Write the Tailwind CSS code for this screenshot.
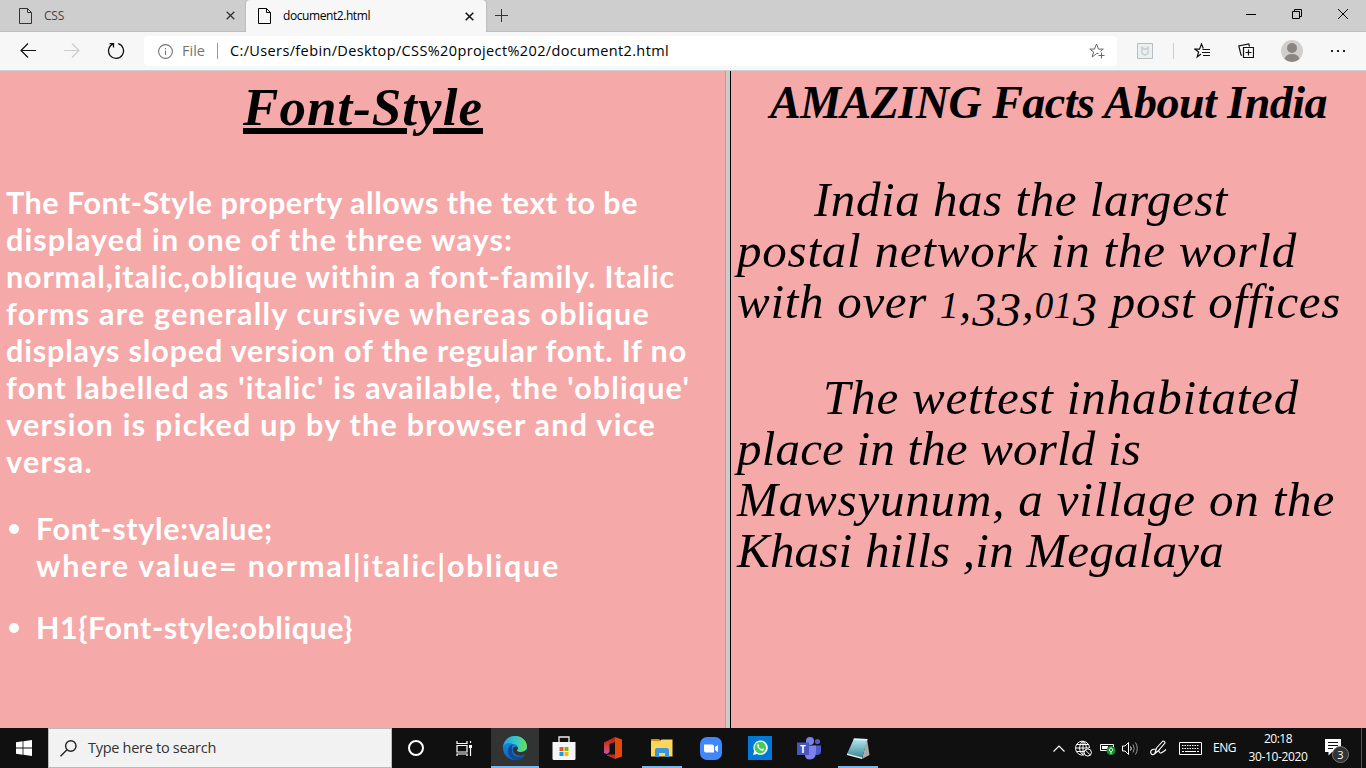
<!DOCTYPE html>
<html lang="en">
<head>
<meta charset="utf-8">
<title>document2.html</title>
<script src="https://cdn.jsdelivr.net/npm/@tailwindcss/browser@4"></script>
</head>
<body class="w-[1366px] h-[768px] overflow-hidden flex flex-col font-['Open_Sans',sans-serif] bg-[#f7f7f7] text-black">

<!-- Tab strip -->
<header class="h-8 shrink-0 flex bg-[#cecece]">
  <div class="w-[246px] h-8 flex items-center pl-[18px] pr-[11px] border-b border-[#bdbdbd] text-[#444]">
    <svg class="w-4 h-4 shrink-0" viewBox="0 0 16 16" fill="none" stroke="#333"><path d="M1.500 .5H9.500L13.500 4.500V15.500H1.500ZM9.500 .5V4.500H13.500"/></svg>
    <span class="ml-[10px] text-[12px] leading-none whitespace-nowrap" data-w="20">CSS</span>
    <svg class="w-[9px] h-[9px] ml-auto" viewBox="0 0 9 9" stroke="#333" stroke-width="1.300"><path d="M.7 .7L8.300 8.300M8.300 .7L.7 8.300"/></svg>
  </div>
  <div class="w-[240px] h-8 flex items-center pl-[11px] pr-[12px] bg-[#f7f7f7] rounded-t-[4px] shadow-[0_0_2px_#999]">
    <svg class="w-4 h-4 shrink-0" viewBox="0 0 16 16" fill="none" stroke="#000"><path d="M1.500 .5H9.500L13.500 4.500V15.500H1.500ZM9.500 .5V4.500H13.500"/></svg>
    <span class="ml-[10px] text-[12px] leading-none whitespace-nowrap" data-w="87">document2.html</span>
    <svg class="w-[9px] h-[9px] ml-auto" viewBox="0 0 9 9" stroke="#111" stroke-width="1.500"><path d="M.7 .7L8.300 8.300M8.300 .7L.7 8.300"/></svg>
  </div>
  <div class="flex-1 flex border-b border-[#bdbdbd] pl-[9px] pr-[18px]">
    <svg class="w-[13px] h-[13px] mt-[9px]" viewBox="0 0 13 13" stroke="#333"><path d="M6.500 0V13M0 6.500H13"/></svg>
    <div class="ml-auto flex mt-[9px] gap-[36px]">
      <svg class="w-[10px] h-[10px]" viewBox="0 0 10 10" stroke="#000"><path d="M0 5.500H10"/></svg>
      <svg class="w-[10px] h-[10px]" viewBox="0 0 10 10" fill="none" stroke="#000"><path d="M.5 2.500H7.500V9.500H.5ZM2.500 2.500V.5H9.500V7.500H7.500"/></svg>
      <svg class="w-[10px] h-[10px]" viewBox="0 0 10 10" stroke="#000"><path d="M0 0L10 10M10 0L0 10"/></svg>
    </div>
  </div>
</header>

<!-- Address bar -->
<nav class="h-[39px] shrink-0 flex items-start pt-1 pl-5 border-b border-[#cfcfcf] bg-[#f7f7f7]">
  <svg class="w-4 h-4 mt-[7px]" viewBox="0 0 16 16" fill="none" stroke="#111" stroke-width="1.200"><path d="M16 7.500H1M8 .5L1 7.500L8 14.500"/></svg>
  <svg class="w-4 h-4 mt-[7px] ml-7" viewBox="0 0 16 16" fill="none" stroke="#ccc" stroke-width="1.200"><path d="M0 7.500H15M8 .5L15 7.500L8 14.500"/></svg>
  <svg class="w-[18px] h-[18px] mt-[6px] ml-[27px]" viewBox="0 0 18 18" fill="none" stroke="#111" stroke-width="1.300"><path d="M11.200 1.700A7.500 7.500 0 1 1 6.300 1.900M2.600 1.600H6.500V5.600"/></svg>
  <div class="w-[973px] h-[30px] ml-[19px] flex items-center bg-white rounded-[4px] pl-[14px] pr-[12px]">
    <svg class="w-[15px] h-[15px] shrink-0" viewBox="0 0 15 15" fill="none" stroke="#767676" stroke-width="1.100"><circle cx="7.500" cy="7.500" r="6.900"/><path d="M7.500 6.500V11M7.500 4V5.200"/></svg>
    <span class="ml-[9px] text-[14.5px] leading-none text-[#757575] whitespace-nowrap" data-w="23">File</span>
    <i class="w-px h-4 bg-[#999] ml-[12px] mr-[12px]"></i>
    <span class="text-[14.5px] leading-none whitespace-nowrap" data-w="439">C:/Users/febin/Desktop/CSS%20project%202/document2.html</span>
    <svg class="w-4 h-4 ml-auto" viewBox="0 0 16 16" fill="none" stroke="#666"><path d="M9.500 10.500L7.500 10.600L3.200 14L4.600 8.900L.8 6.100H5.500L7.500 1L9.500 6.100H14.300L11.300 8.500M12.500 9.500V15.500M9.500 12.500H15.500"/></svg>
  </div>
  <svg class="w-4 h-4 mt-[7px] ml-5" viewBox="0 0 16 16" fill="#edf0f1" stroke="#b4bec4"><path d="M.5 .5H15.500V15.500H.5Z"/><path d="M5 4.500L8 6.500L11 4.500V10.500L8 12L5 10.500Z" fill="none" stroke="#c9d0d6" stroke-width="1.600"/></svg>
  <i class="w-px h-4 bg-[#ccc] mt-[7px] ml-5"></i>
  <svg class="w-4 h-4 mt-[7px] ml-[20px]" viewBox="0 0 16 16" fill="none" stroke="#111" stroke-width="1.200"><path d="M7 11L3.200 14L4.600 8.900L.8 6.100H5.500L7.500 1L9.300 5.500M8.500 6.500H16M8 9.500H16M9 12.500H16"/></svg>
  <svg class="w-4 h-4 mt-[7px] ml-[28px]" viewBox="0 0 16 16" fill="none" stroke="#111" stroke-width="1.200"><path d="M5.500 4.500H15.500V14.500H5.500ZM10.500 6.500V12.500M7.500 9.500H13.500M4 12.500L3 11.800L.8 2.900L10.800 1L11.500 3.500"/></svg>
  <svg class="w-[22px] h-[22px] mt-1 ml-[27px]" viewBox="0 0 22 22"><circle cx="11" cy="11" r="11" fill="#d1cfcc"/><circle cx="11" cy="8" r="5" fill="#8a8582"/><path d="M3.500 19Q5 14 11 14T18.500 19Q11 25 3.500 19" fill="#8a8582"/></svg>
  <svg class="w-4 h-4 mt-[7px] ml-7" viewBox="0 0 16 16" fill="#222"><path d="M0 7h2v2H0zM6 7h2v2H6zM12 7h2v2h-2z"/></svg>
</nav>

<!-- Two framed documents -->
<main class="h-[657px] shrink-0 flex bg-[#f5a9a9]">
  <section class="w-[725px] shrink-0">
    <h1 class="ml-[243px] h-[113px] pt-[3px] w-[240px] text-[53px] leading-[66px] font-bold italic font-['Liberation_Serif',serif] whitespace-nowrap underline decoration-[6px] underline-offset-[3px]"><span data-w="240">Font-Style</span></h1>
    <div class="font-['Lato',sans-serif] font-bold text-[30.5px] leading-[37px] text-white whitespace-nowrap">
      <p class="ml-[6px]">
        <span data-w="632">The Font-Style property allows the text to be</span><br>
        <span data-w="507">displayed in one of the three ways:</span><br>
        <span data-w="669">normal,italic,oblique within a font-family. Italic</span><br>
        <span data-w="644">forms are generally cursive whereas oblique</span><br>
        <span data-w="681">displays sloped version of the regular font. If no</span><br>
        <span data-w="684">font labelled as 'italic' is available, the 'oblique'</span><br>
        <span data-w="650">version is picked up by the browser and vice</span><br>
        <span data-w="87">versa.</span>
      </p>
      <ul class="mt-[30px] ml-[9px] flex flex-col gap-[25px]">
        <li class="flex"><i class="w-[10px] h-[10px] shrink-0 mt-[14px] mr-[17px] rounded-full bg-white"></i><div><span data-w="237">Font-style:value;</span><br><span data-w="524">where value= normal|italic|oblique</span></div></li>
        <li class="flex"><i class="w-[10px] h-[10px] shrink-0 mt-[14px] mr-[17px] rounded-full bg-white"></i><div><span data-w="317">H1{Font-style:oblique}</span></div></li>
      </ul>
    </div>
  </section>
  <div class="w-[6px] shrink-0 bg-[#cbcbcb] border-l border-l-[#a5a5a5] border-r border-r-black"></div>
  <section class="flex-1 pl-[6px] italic font-['Liberation_Serif',serif] whitespace-nowrap">
    <h1 class="pl-[33px] pt-[5px] h-[103px] text-[46px] leading-[54px] font-bold"><span data-w="557">AMAZING Facts About India</span></h1>
    <p class="h-[153px] text-[49px] leading-[51px]">
      <span class="ml-[77px]" data-w="414">India has the largest</span><br>
      <span data-w="560">postal network in the world</span><br>
      <span data-w="604">with over <span class="text-[37px] leading-none">1</span>,<span class="text-[48px] leading-none align-[-8px]">33</span>,<span class="text-[37px] leading-none">01</span><span class="text-[48px] leading-none align-[-8px]">3</span> post offices</span>
    </p>
    <p class="mt-[45px] text-[49px] leading-[51px]">
      <span class="ml-[86px]" data-w="476">The wettest inhabitated</span><br>
      <span data-w="404">place in the world is</span><br>
      <span data-w="598">Mawsyunum, a village on the</span><br>
      <span data-w="487">Khasi hills ,in Megalaya</span>
    </p>
  </section>
</main>

<!-- Taskbar -->
<footer class="h-10 shrink-0 flex bg-[#101010] text-white">
  <div class="w-12 flex items-center justify-center"><svg class="w-4 h-4" viewBox="0 0 16 16" fill="#fff"><path d="M0 2.200L6.600 1.300V7.600H0ZM7.400 1.200L16 0V7.600H7.400ZM0 8.400H6.600V14.700L0 13.800ZM7.400 8.400H16V16L7.400 14.800Z"/></svg></div>
  <div class="w-[344px] flex items-center bg-[#f2f2f2] border border-[#bababa] text-[#333] pl-[11px]">
    <svg class="w-[17px] h-[17px]" viewBox="0 0 17 17" fill="none" stroke="#222" stroke-width="1.400"><circle cx="10.800" cy="6" r="5.200"/><path d="M7 9.800L.5 16.300"/></svg>
    <span class="ml-[11px] text-[14.5px] leading-none whitespace-nowrap" data-w="128">Type here to search</span>
  </div>
  <div class="w-12 flex items-center justify-center"><i class="w-4 h-4 rounded-full border-2 border-white"></i></div>
  <div class="w-[51px] flex items-center justify-center pr-[3px] pt-px"><svg class="w-[17px] h-[17px]" viewBox="0 0 17 17" fill="none" stroke="#fff" stroke-width="1.200"><path d="M1 1V3.500H11V1M1 5.500H11V12H1ZM1 16V14H11V16M14.500 1V3M14.500 8V16"/><path d="M13 5h3v3h-3z" fill="#fff" stroke="none"/></svg></div>
  <div class="w-12 flex items-center justify-center bg-[#333] border-b-2 border-[#76b9ed] pt-[2px]">
    <svg class="w-6 h-6" viewBox="0 0 24 24"><defs><linearGradient id="eg"><stop stop-color="#249fe6"/><stop offset=".55" stop-color="#35c9c8"/><stop offset="1" stop-color="#70df4b"/></linearGradient><linearGradient id="eb" x2="0" y2="1"><stop stop-color="#1b94e0"/><stop offset="1" stop-color="#1460b8"/></linearGradient></defs><circle cx="12" cy="12" r="12" fill="url(#eb)"/><path d="M0 11C1 4 6 0 12 0C19 0 24 5 24 10.500C24 14 21 16 18 16C15 16 13.500 15 14 14C16 11 14 8 10 8C6 6 2 7 0 11Z" fill="url(#eg)"/><path d="M9 12Q8 20 15 21Q19 21.500 22.500 18.500Q19 24 13 24Q5 22 5 15Q5 9 11 8Q8 10 9 12" fill="#0b4c99"/><path d="M14.500 11Q16 12.500 14 14Q13.500 16 18 16Q21 16 23.500 13.500Q24 16 22.500 18.500Q17 21 12 18Q9 15 10 12Q12 10 14.500 11" fill="#333"/></svg></div>
  <div class="w-[49px] flex items-center justify-center"><svg class="w-6 h-6" viewBox="0 0 24 24"><path d="M7 6V1H17V6" fill="none" stroke="#eee" stroke-width="1.300"/><path d="M.5 6H23.500V22.500Q23.500 24 22 24H2Q.5 24 .5 22.500Z" fill="#f5f5f5"/><path fill="#f25022" d="M7.500 11h4v4h-4z"/><path fill="#7fba00" d="M12.500 11h4v4h-4z"/><path fill="#00a4ef" d="M7.500 16h4v4h-4z"/><path fill="#ffb900" d="M12.500 16h4v4h-4z"/></svg></div>
  <div class="w-[50px] flex items-center justify-center"><svg class="w-[18px] h-[22px]" viewBox="0 0 18 22"><defs><linearGradient id="of" x2="0" y2="1"><stop stop-color="#b51c10"/><stop offset=".5" stop-color="#d43b39"/><stop offset="1" stop-color="#b75fad"/></linearGradient></defs><path d="M0 5.500L11 0V5L5.500 7V15L3 17L0 16Z" fill="url(#of)"/><path d="M11 0L18 2.500V19.500L11 22Z" fill="#e34a08"/><path d="M2 18L5 17.500H11V22Z" fill="#c42920"/></svg></div>
  <div class="w-[40px] ml-[4px] mr-[5px] flex items-center justify-center border-b-2 border-[#76b9ed] pt-[2px]"><svg class="w-[22px] h-5" viewBox="0 0 22 20"><path d="M0 1H8L10 3H0Z" fill="#d98c00"/><path d="M0 3H9L10.500 1.500H21.500V18.500H0Z" fill="#ffd65c"/><path d="M4 19V12Q4 10 6 10H16Q18 10 18 12V19H14V15H8V19Z" fill="#3a96dd"/></svg></div>
  <div class="w-[48px] flex items-center justify-center"><svg class="w-[22px] h-[23px]" viewBox="0 0 22 23"><rect width="22" height="23" rx="7" fill="#4087fc"/><path d="M4 7.500H12Q14 7.500 14 9.500V15.500H6Q4 15.500 4 13.500ZM15 10L18 8V15L15 13Z" fill="#fff"/></svg></div>
  <div class="w-[50px] flex items-center justify-center"><svg class="w-6 h-6" viewBox="0 0 24 24"><path d="M0 0H24V24H0Z" fill="#0078d7"/><path d="M5 19L6.200 15A7.200 7.200 0 1 1 9 17.900Z" fill="#fff"/><circle cx="12.300" cy="11.600" r="5.800" fill="#48c95c"/><path d="M9.500 8.500Q10.500 7.500 11.200 9.300L10.600 10.500Q11.600 12.500 13.600 13.200L14.600 12.300Q16.600 13 15.400 14.500Q14 15.500 11.600 13.600Q8.200 10.500 9.500 8.500" fill="#fff"/></svg></div>
  <div class="w-[48px] flex items-center justify-center"><svg class="w-6 h-[23px]" viewBox="0 0 24 23"><circle cx="20.500" cy="4.500" r="2.600" fill="#5059c9"/><path d="M16 8.500H24V14Q24 18.500 19 18Z" fill="#5059c9"/><circle cx="13" cy="4" r="4" fill="#7b83eb"/><path d="M9 8.500H19V16Q18.500 22.500 13 22.500T8 17Z" fill="#7b83eb"/><path d="M0 5.500H12V18H0Z" fill="#4b53bc"/><text x="6" y="15.500" text-anchor="middle" font-size="10" font-weight="700" font-family="Open Sans" fill="#fff">T</text></svg></div>
  <div class="w-10 ml-[5px] flex items-center justify-center border-b-2 border-[#76b9ed] pt-[2px]"><svg class="w-[23px] h-[22px]" viewBox="0 0 23 22"><defs><linearGradient id="np" x2="0" y2="1"><stop stop-color="#b8eaf0"/><stop offset="1" stop-color="#328391"/></linearGradient></defs><path d="M20 2L22.500 18L15 22Z" fill="#aaa"/><path d="M7 1.500L20.500 2L15 21.500L0 17Z" fill="url(#np)"/><path d="M7 1.500L20.500 2L20 3.500L6.500 3Z" fill="#eee"/><path d="M0 16.500L15 20.500V22L0 18Z" fill="#eee"/></svg></div>
  <div class="ml-auto flex items-center pr-[4px]">
    <svg class="w-3 h-[7px]" viewBox="0 0 12 7" fill="none" stroke="#fff" stroke-width="1.200"><path d="M.5 6.500L6 1L11.500 6.500"/></svg>
    <svg class="w-[17px] h-[17px] ml-[10px]" viewBox="0 0 17 17" fill="none" stroke="#fff"><path d="M9 15A7 7 0 1 1 14.500 8M8 15Q4 12 4.500 7.500T8 1Q11.500 4 11.500 8M8 1V15M1 8H14M2 4.500H14M2 11.500H9"/><circle cx="12.800" cy="12.500" r="3.600" fill="#101010"/><path d="M10.300 10L15.300 15"/></svg>
    <svg class="w-[16px] h-[14px] ml-[8px]" viewBox="0 0 16 14" fill="none"><path d="M.5 3.500H13.500V9.500H.5Z" stroke="#fff"/><path d="M2 5h6v3H2z" fill="#fff"/><circle cx="11" cy="9.500" r="4.500" fill="#16912e"/><path d="M11 6.500L13 9L11 11L9 9ZM11 11V13" stroke="#fff" stroke-width=".9"/></svg>
    <svg class="w-[17px] h-[15px] ml-[6px]" viewBox="0 0 17 15" fill="none" stroke="#fff"><path d="M.5 5V10H3L6.500 13.500V1.500L3 5ZM8.500 5.500Q10 7.500 8.500 9.500"/><path d="M11 3.500Q13.500 7.500 11 11.500M13.500 1.500Q17 7.500 13.500 13.500" stroke="#999"/></svg>
    <svg class="w-[17px] h-[17px] ml-[11px]" viewBox="0 0 17 17" fill="none" stroke="#fff" stroke-width="1.100"><path d="M5 13L6.500 8L13 1Q15 1 15 3L8 11ZM6 9Q0 9 .8 13Q2 16 5 13.500T9 11Q9.500 14 12 12.500T16 9.500"/></svg>
    <svg class="w-[23px] h-[13px] ml-[12px]" viewBox="0 0 23 13" fill="none" stroke="#fff"><path d="M.5 .5H22.500V12.500H.5Z"/><path d="M3 3.500H20M3 6.500H20" stroke-dasharray="1.500 1"/><path d="M3 9.500H5M6 9.500H17M18 9.500H20"/></svg>
    <span class="ml-[11px] text-[12px] leading-none whitespace-nowrap" data-w="23">ENG</span>
    <div class="ml-[12px] w-[60px] flex flex-col items-center text-[12px] leading-[18px] whitespace-nowrap"><span data-w="28">20:18</span><span data-w="59">30-10-2020</span></div>
    <svg class="w-[25px] h-[26px] ml-[17px] mt-[4px]" viewBox="0 0 25 26"><path d="M0 2H16V15H7L3.500 18.500V15H0Z" fill="#fff"/><path d="M3 5.500H13M3 8.500H13M3 11.500H8" stroke="#111"/><circle cx="15.500" cy="17.500" r="8" fill="#333" stroke="#777"/><text x="15.500" y="21.500" text-anchor="middle" font-size="11" font-family="Open Sans" fill="#fff">3</text></svg>
    <i class="w-px h-10 bg-[#555] ml-[11px]"></i>
  </div>
</footer>

<script>
function fitLines() {
  document.querySelectorAll('[data-w]').forEach(function (el) {
    el.style.letterSpacing = '0px';
    var range = document.createRange();
    range.selectNodeContents(el);
    var natural = range.getBoundingClientRect().width;
    el.style.letterSpacing = ((+el.dataset.w - natural) / el.textContent.length) + 'px';
  });
}
window.addEventListener('load', function () {
  fitLines();
  document.fonts.ready.then(fitLines);
  setTimeout(fitLines, 50);
});
</script>
</body>
</html>
